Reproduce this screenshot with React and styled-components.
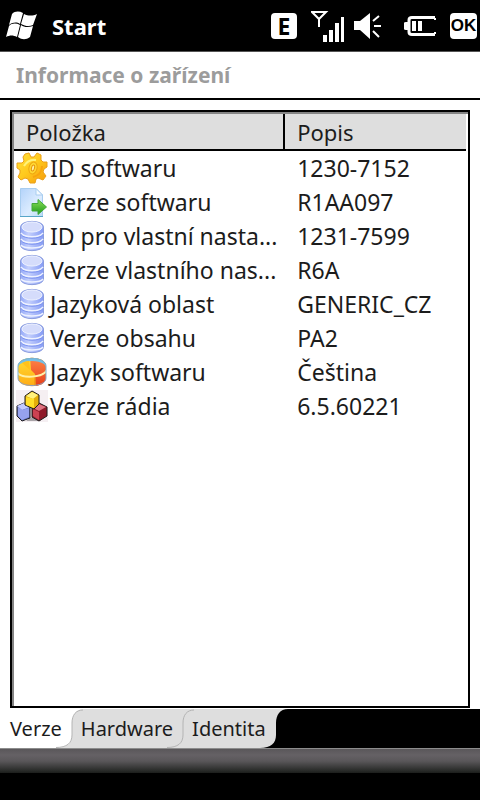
import React, { useState } from 'react'
import styled, { createGlobalStyle } from 'styled-components'


const GlobalStyle = createGlobalStyle`
    * {
        box-sizing: border-box;
    }

    body {
        margin: 0;
        background: #fff;
        color: #1c1c1c;
        font-family: "Noto Sans", "DejaVu Sans", sans-serif;
    }

    button {
        font-family: inherit;
        color: inherit;
        border: none;
        padding: 0;
        margin: 0;
        background: none;
        cursor: pointer;
    }

    svg {
        display: block;
        flex: none;
    }
`

const StPage = styled.div`
    min-height: 100vh;
    display: flex;
    flex-direction: column;
`

const StTopBar = styled.header`
    height: 52px;
    padding: 0 3px 0 6px;
    display: flex;
    align-items: center;
    justify-content: space-between;
    background: #000;
    color: #fff;
    border-bottom: 1px solid #555;
`

const StStart = styled.button`
    display: flex;
    align-items: center;
    gap: 15px;
    font-size: 22px;
    line-height: 30px;
    font-weight: 700;
`

const StStatus = styled.div`
    display: flex;
    align-items: center;
    gap: 14px;
`

const StSignals = styled.div`
    display: flex;
    align-items: center;
    gap: 10px;
`

const StBadge = styled.span`
    width: 26px;
    height: 26px;
    border-radius: 4px;
    background: #fff;
    color: #000;
    font-size: 23px;
    line-height: 26px;
    font-weight: 700;
    text-align: center;
`

const StOk = styled.button`
    width: 27px;
    height: 26px;
    border-radius: 4px;
    background: #fff;
    color: #000;
    font-family: "Liberation Sans", sans-serif;
    font-size: 17px;
    line-height: 26px;
    font-weight: 700;
    display: flex;
    justify-content: center;
`

const StTitle = styled.h1`
    margin: 0;
    padding: 8px 16px;
    border-bottom: 2px solid #000;
    color: #9c9c9c;
    font-size: 21px;
    line-height: 30px;
    font-weight: 700;
`

const StPanel = styled.main`
    flex: 1;
    margin: 10px 10px 0;
    border: 2px solid #000;
    box-shadow: inset 2px 2px 0 #848484;
    padding: 2px;
`

const StTable = styled.table`
    width: 100%;
    table-layout: fixed;
    border-collapse: separate;
    border-spacing: 0;
    font-size: 23px;
    line-height: 34px;
    text-align: left;
`

const StHead = styled.th`
    width: ${({ $width }) => $width};
    height: 37px;
    padding: 0 12px;
    background: #dedede;
    border-bottom: 2px solid #000;
    border-right: ${({ $divided }) => ($divided ? '2px solid #000' : 'none')};
    font-size: 22px;
    font-weight: 400;
`

const StCell = styled.td`
    height: 34px;
    padding: 0 12px;
    white-space: nowrap;
`

const StNameCell = styled(StCell)`
    padding: 0 0 0 2px;
`

const StName = styled.div`
    display: flex;
    align-items: center;
    gap: 2px;
`

const StTabs = styled.div`
    height: 40px;
    margin-top: 1px;
    display: flex;
    background: #000;
    border-bottom: 1px solid #8c8c8c;
`

const StTab = styled.button`
    padding: 0 10px 0 9px;
    background: ${({ $active }) => ($active ? '#fff' : '#dedede')};
    font-size: 20px;
    line-height: 40px;

    &:first-child {
        padding-left: 10px;
    }
`

const StEdge = styled.svg`
    width: 28px;
    height: 39px;
    margin: 0 -12px 0 -16px;
    z-index: 1;
    pointer-events: none;
`

const StSoftBar = styled.footer`
    height: 51px;
    background: linear-gradient(#5a575a 0, #656165 6px, #5a575a 12px, #2c2e2c 21px, #1c1e1c 24px, #000 24px);
`

const WindowsLogo = () => (
    <svg width="31" height="30" viewBox="0 0 31 30" fill="#fff">
        <path d="M6 3C9 0 13 0 17 2L14 13C11 11 7 11 3 14Z" />
        <path d="M18 3C22 5 27 5 31 3L27 14C23 16 19 15 15 13Z" />
        <path d="M3 15C6 12 10 12 14 14L11 26C7 24 4 24 0 26Z" />
        <path d="M15 14C19 17 23 16 27 15L24 26C20 29 16 29 12 26Z" />
    </svg>
)

const SignalIcon = () => (
    <svg width="33" height="32" viewBox="0 0 33 32">
        <path d="M1 2H15L8 9Z M8 9V17" fill="none" stroke="#fff" strokeWidth="2" />
        <path d="M12 25h4v7h-4z M18 20h4v12h-4z M24 13h4v19h-4z M30 7h3v25h-3z" fill="#fff" />
    </svg>
)

const SpeakerIcon = () => (
    <svg width="27" height="28" viewBox="0 0 27 28">
        <path d="M0 9H6L16 1V27L6 18H0Z" fill="#fff" />
        <path d="M19 9L25 4M20 14H27M19 19L25 25" stroke="#fff" strokeWidth="2" />
    </svg>
)

const StBattery = styled.svg`
    margin-left: 13px;
`

const BatteryIcon = () => (
    <StBattery width="32" height="20" viewBox="0 0 32 20">
        <path d="M31 1.5H8Q5 1.5 5 4V16Q5 18.5 8 18.5H31" fill="none" stroke="#fff" strokeWidth="3" />
        <path d="M0 7Q0 6 2 6H4V14H2Q0 14 0 13ZM30 2h2v2h-2zM30 16h2v2h-2z" fill="#fff" />
        <path d="M8 5h4v10h-4zM14 5h4v10h-4z" fill="#fff" />
    </StBattery>
)

const GearIcon = () => (
    <svg width="32" height="32" viewBox="0 0 32 32">
        <defs>
            <linearGradient id="gear" x1="0" y1="0" x2="1" y2="1">
                <stop offset="0" stopColor="#ffe23a" />
                <stop offset="0.5" stopColor="#ffc81c" />
                <stop offset="1" stopColor="#f59a0c" />
            </linearGradient>
        </defs>
        <path
            d="M9 2L13 1L15 5L18 5L21 1L25 3L25 8L27 10L31 10L31 15L28 17L27 20L30 24L27 28L22 26L20 27L19 31L14 31L12 27L9 26L5 28L2 25L4 21L4 18L1 16L1 11L6 11L8 9L7 5Z"
            fill="url(#gear)" stroke="#eba018" strokeLinejoin="round"
        />
        <path d="M8 14Q12 7 20 8" fill="none" stroke="#fff27a" strokeWidth="2" />
        <path d="M26 14Q26 23 17 25" fill="none" stroke="#f7a40f" strokeWidth="2" />
        <ellipse cx="17" cy="16" rx="4" ry="6" transform="rotate(15 17 16)" fill="#ffd933" stroke="#eda511" />
        <ellipse cx="17" cy="16" rx="1.5" ry="3" transform="rotate(15 17 16)" fill="#fff0a0" stroke="#e6940a" />
    </svg>
)

const FileIcon = () => (
    <svg width="32" height="32" viewBox="0 0 32 32">
        <defs>
            <linearGradient id="sheet" x1="0" y1="0" x2="1" y2="1">
                <stop offset="0" stopColor="#b3d3fa" />
                <stop offset="0.6" stopColor="#dcecff" />
                <stop offset="1" stopColor="#b8dcf4" />
            </linearGradient>
            <linearGradient id="arrow" x1="0" y1="0" x2="0" y2="1">
                <stop offset="0" stopColor="#8be05a" />
                <stop offset="1" stopColor="#1d9a18" />
            </linearGradient>
        </defs>
        <path d="M4.5 2.5H20L26.5 9V30.5H4.5Z" fill="url(#sheet)" stroke="#a8cdf0" />
        <path d="M4 30.5H27" stroke="#58a6c8" />
        <path d="M20 2.5V9H26.5Z" fill="#f4faff" stroke="#a8cdf0" />
        <path d="M16 17.5H22V13.5L30.5 21L22 28.5V25H16Z" fill="url(#arrow)" stroke="#43a83a" />
    </svg>
)

const DatabaseIcon = () => (
    <svg width="32" height="32" viewBox="0 0 32 32">
        <defs>
            <linearGradient id="drum" x1="0" y1="0" x2="1" y2="0">
                <stop offset="0" stopColor="#94a9f8" />
                <stop offset="0.35" stopColor="#c3cffd" />
                <stop offset="1" stopColor="#859bf5" />
            </linearGradient>
        </defs>
        <path d="M4.5 7C4.5 -0.5 27.5 -0.5 27.5 7V25C27.5 32.5 4.5 32.5 4.5 25Z" fill="url(#drum)" stroke="#8b9dde" />
        <ellipse cx="16" cy="7" rx="10" ry="5" fill="#d5dcfb" stroke="#eef2ff" />
        <path d="M5 13C8 18 24 18 27 13M5 19C8 24 24 24 27 19M5 25C8 29 24 29 27 25" fill="none" stroke="#eef2ff" strokeWidth="1.5" />
        <path d="M5 14.5C8 19.5 24 19.5 27 14.5M5 20.5C8 25.5 24 25.5 27 20.5" fill="none" stroke="#7d94f0" />
    </svg>
)

const PieIcon = () => (
    <svg width="32" height="32" viewBox="0 0 32 32">
        <defs>
            <linearGradient id="pieRed" x1="0" y1="0" x2="0" y2="1">
                <stop offset="0" stopColor="#ff8a4c" />
                <stop offset="1" stopColor="#e63a14" />
            </linearGradient>
            <linearGradient id="pieYellow" x1="0" y1="0" x2="0" y2="1">
                <stop offset="0" stopColor="#ffe136" />
                <stop offset="1" stopColor="#ffa812" />
            </linearGradient>
            <clipPath id="pieBody">
                <path d="M2 10C2 -1 30 -1 30 10V22C30 33 2 33 2 22Z" />
            </clipPath>
        </defs>
        <g clipPath="url(#pieBody)">
            <path d="M0 0h32v32H0z" fill="url(#pieYellow)" />
            <path d="M14 0H32V32H20L19 18L15 14Z" fill="url(#pieRed)" />
            <path d="M1 12Q3 1 16 1Q29 1 31 12L28 8Q23 5 16 5Q9 5 4 8Z" fill="#74c0e6" />
            <path d="M6 7L14 14L13 5Q9 5 6 7Z" fill="#ffc21c" />
            <path d="M19 20V31" stroke="#e88a10" />
            <path d="M1 16C5 23 27 22 31 14" fill="none" stroke="#fff0a8" strokeWidth="2" />
        </g>
        <path d="M2 22C2 32 30 32 30 22" fill="none" stroke="#8a9fc8" />
        <path d="M2 22V10C2 0 30 0 30 10V22" fill="none" stroke="#7cb0cf" />
    </svg>
)

const CubesIcon = () => (
    <svg width="32" height="32" viewBox="0 0 32 32" stroke="#1c1c1c" strokeLinejoin="round">
        <path d="M0 0h32v32H0z" fill="#f5eff2" stroke="none" />
        <path d="M14 28L18 26L25 31H10Z" fill="#a9a4a8" stroke="none" />
        <path d="M1 16L8 13L14 17V28L6 31L1 26Z" fill="#6573c4" />
        <path d="M1 16L8 13L14 17L6 20Z" fill="#c3caff" stroke="none" />
        <path d="M2 17L6 20L13 18V27L6 30L2 26Z" fill="#96a2ee" stroke="none" />
        <path d="M16 18L23 13L31 17V26L23 31L16 27Z" fill="#8f1a2a" />
        <path d="M17 18L23 14L30 17L23 21Z" fill="#df7482" stroke="none" />
        <path d="M17 19L23 22V30L17 26Z" fill="#cc4252" stroke="none" />
        <path d="M9 6L16 1L23 5V14L18 19L9 15Z" fill="#e3ad0a" />
        <path d="M10 6L16 2L22 5L17 9Z" fill="#fff27d" stroke="none" />
        <path d="M10 7L18 9V18L10 15Z" fill="#ffdf28" stroke="none" />
    </svg>
)

const TabEdge = ({ left, right }) => (
    <StEdge viewBox="0 0 28 39" aria-hidden="true">
        <path d="M16 0H28C20 0 16 6 16 14Z" fill={left} />
        <path d="M0 39C11 39 16 34 16 26V39Z" fill={right} />
        {right !== '#000' && (
            <path d="M0 38.5C11 38.5 16 34 16 26V14C16 6 20 1 27 1" fill="none" stroke="#b4b4b4" />
        )}
    </StEdge>
)

const rows = [
    { icon: GearIcon, name: 'ID softwaru', value: '1230-7152' },
    { icon: FileIcon, name: 'Verze softwaru', value: 'R1AA097' },
    { icon: DatabaseIcon, name: 'ID pro vlastní nasta...', value: '1231-7599' },
    { icon: DatabaseIcon, name: 'Verze vlastního nas...', value: 'R6A' },
    { icon: DatabaseIcon, name: 'Jazyková oblast', value: 'GENERIC_CZ' },
    { icon: DatabaseIcon, name: 'Verze obsahu', value: 'PA2' },
    { icon: PieIcon, name: 'Jazyk softwaru', value: 'Čeština' },
    { icon: CubesIcon, name: 'Verze rádia', value: '6.5.60221' },
]

const tabs = ['Verze', 'Hardware', 'Identita']

const App = () => {

    const [active, setActive] = useState(0)

    const tabColor = (index) => {
        if (index >= tabs.length) return '#000'
        return index === active ? '#fff' : '#dedede'
    }

    return (
        <StPage>
            <GlobalStyle />
            <StTopBar>
                <StStart>
                    <WindowsLogo />
                    Start
                </StStart>
                <StStatus>
                    <StBadge>E</StBadge>
                    <StSignals>
                        <SignalIcon />
                        <SpeakerIcon />
                        <BatteryIcon />
                    </StSignals>
                    <StOk>OK</StOk>
                </StStatus>
            </StTopBar>
            <StTitle>Informace o zařízení</StTitle>
            <StPanel>
                <StTable>
                    <thead>
                        <tr>
                            <StHead $width="60%" $divided>Položka</StHead>
                            <StHead $width="40%">Popis</StHead>
                        </tr>
                    </thead>
                    <tbody>
                        {rows.map(({ icon: Icon, name, value }) => (
                            <tr key={name}>
                                <StNameCell>
                                    <StName>
                                        <Icon />
                                        {name}
                                    </StName>
                                </StNameCell>
                                <StCell>{value}</StCell>
                            </tr>
                        ))}
                    </tbody>
                </StTable>
            </StPanel>
            <StTabs role="tablist">
                {tabs.map((tab, index) => (
                    <React.Fragment key={tab}>
                        <StTab
                            role="tab"
                            aria-selected={index === active}
                            $active={index === active}
                            onClick={() => setActive(index)}
                        >
                            {tab}
                        </StTab>
                        <TabEdge left={tabColor(index)} right={tabColor(index + 1)} />
                    </React.Fragment>
                ))}
            </StTabs>
            <StSoftBar />
        </StPage>
    )
}
export default App
